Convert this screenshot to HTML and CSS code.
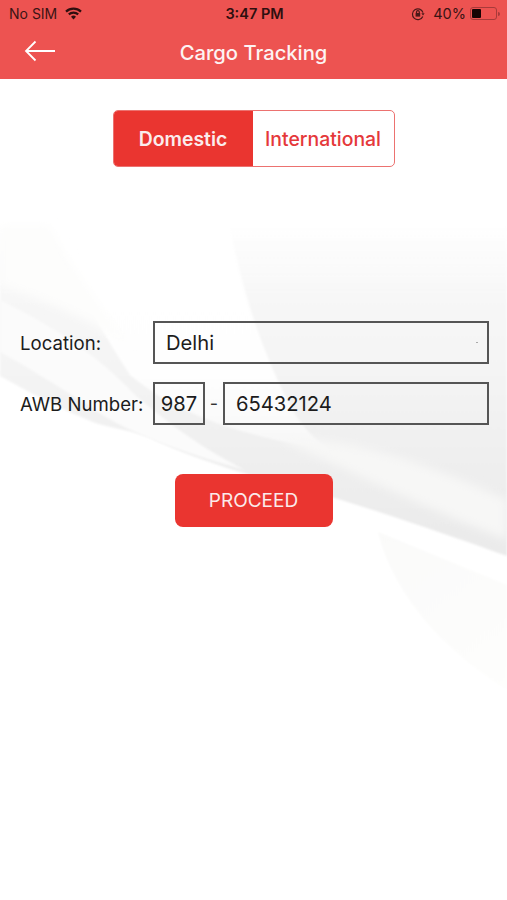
FILE: index.html
```html
<!DOCTYPE html>
<html lang="en">
  <head>
    <meta charset="UTF-8" />
    <meta name="viewport" content="width=device-width, initial-scale=1.0" />
    <title>Cargo Tracking</title>
    <link rel="stylesheet" href="styles.css">
  </head>
  <body>
    <div class="screen">
      <!-- background swoosh -->
      <svg class="swoosh" width="507" height="821" viewBox="0 79 507 821">
        <defs>
          <linearGradient id="base" gradientUnits="userSpaceOnUse" x1="0" y1="222" x2="0" y2="530">
            <stop offset="0" stop-color="#f6f6f6" stop-opacity="0" />
            <stop offset="0.25" stop-color="#f7f7f7" />
            <stop offset="0.55" stop-color="#f3f3f3" />
            <stop offset="1" stop-color="#ebebeb" />
          </linearGradient>
          <linearGradient id="wedge" gradientUnits="userSpaceOnUse" x1="0" y1="225" x2="0" y2="440">
            <stop offset="0" stop-color="#fff" />
            <stop offset="0.7" stop-color="#fefefe" />
            <stop offset="1" stop-color="#f8f8f8" />
          </linearGradient>
          <linearGradient id="tail" gradientUnits="userSpaceOnUse" x1="380" y1="520" x2="507" y2="700">
            <stop offset="0" stop-color="#fafaf9" />
            <stop offset="1" stop-color="#fefefd" />
          </linearGradient>
          <filter id="soft"><feGaussianBlur stdDeviation="1" /></filter>
          <filter id="softer"><feGaussianBlur stdDeviation="5" /></filter>
        </defs>
        <path d="M0 215 H507 V556 C440 532 390 515 335 498 C270 482 200 462 150 438 C125 428 105 428 88 420 C55 406 25 390 0 376 Z" fill="url(#base)" filter="url(#soft)" />
        <path d="M40 215 H228 C238 275 258 345 290 405 C300 425 315 440 330 450 C270 440 190 425 130 375 C100 330 70 270 40 215 Z" fill="url(#wedge)" filter="url(#soft)" />
        <path d="M0 300 C50 325 95 352 135 395 C170 425 205 450 245 470 C180 452 120 430 88 405 C55 385 25 365 0 352 Z" fill="#fbfbfb" filter="url(#soft)" />
        <path d="M0 225 H50 C70 265 100 305 130 345 C90 320 45 300 0 285 Z" fill="#fdfdfc" filter="url(#softer)" />
        <path d="M280 440 C340 435 420 460 507 500 V540 C430 510 350 470 280 440 Z" fill="#f7f7f6" filter="url(#softer)" />
        <path d="M378 532 L507 585 V690 C450 655 395 600 378 532 Z" fill="url(#tail)" filter="url(#soft)" />
      </svg>

      <header class="topbar">
        <div class="status">
          <div class="status-left">
            <span>No SIM</span>
            <svg class="wifi" width="17" height="13" viewBox="0 0 17 13">
              <path d="M1 4.6 A11 11 0 0 1 16 4.6" />
              <path d="M3.8 7.4 A7 7 0 0 1 13.2 7.4" />
              <path d="M8.5 12.6 L6 9.7 A3.6 3.6 0 0 1 11 9.7 Z" class="wifi-dot" />
            </svg>
          </div>
          <span class="clock">3:47 PM</span>
          <div class="status-right">
            <svg class="lock" width="14" height="14" viewBox="0 0 14 14">
              <path d="M11.8 9.4 A5.4 5.4 0 1 1 12 5.6" />
              <path d="M10.4 6.2 L13.6 6.2 L12 8.4 Z" class="lock-fill" />
              <rect x="4.6" y="6" width="4.6" height="3.6" class="lock-fill" />
              <path d="M5.5 6 V5 A1.4 1.4 0 0 1 8.3 5 V6" />
            </svg>
            <span class="pct">40%</span>
            <div class="battery"><div class="battery-level"></div></div>
            <div class="battery-tip"></div>
          </div>
        </div>
        <div class="navbar">
          <svg class="back" width="32" height="22" viewBox="0 0 32 22">
            <path d="M31 11 H2 M11.5 1.5 L2 11 L11.5 20.5" />
          </svg>
          <h1>Cargo Tracking</h1>
        </div>
      </header>

      <main class="content">
        <div class="tabs">
          <div class="tab active">Domestic</div>
          <div class="tab">International</div>
        </div>

        <div class="form">
          <div class="row">
            <label>Location:</label>
            <div class="field field-wide">Delhi<span class="caret"></span></div>
          </div>
          <div class="row">
            <label>AWB Number:</label>
            <div class="field field-code">987</div>
            <span class="dash">-</span>
            <div class="field field-wide">65432124</div>
          </div>
        </div>

        <a href="#" class="btn">PROCEED</a>
      </main>
    </div>
  </body>
</html>
```

FILE: styles.css
```css
body {
  font-family: Inter, "Liberation Sans", sans-serif;
  margin: 0;
  padding: 0;
  background-color: #fff;
}
.screen {
  position: relative;
  width: 507px;
  height: 900px;
  overflow: hidden;
  background: #fff;
}
.swoosh {
  position: absolute;
  left: 0;
  top: 79px;
}
.topbar {
  position: relative;
  height: 79px;
  background: #ed5351;
}
.status {
  display: grid;
  grid-template-columns: 1fr auto 1fr;
  align-items: center;
  height: 27px;
  padding: 0 7px 0 9px;
  color: #3a1414;
  font-size: 14px;
}
.status-left {
  display: flex;
  align-items: center;
  gap: 8px;
}
.wifi path {
  fill: none;
  stroke: #2e0f0f;
  stroke-width: 2.2;
}
.wifi .wifi-dot {
  fill: #2e0f0f;
  stroke: none;
}
.clock {
  font-weight: 600;
  font-size: 14.5px;
  color: #2e0f0f;
}
.status-right {
  display: flex;
  align-items: center;
  justify-content: flex-end;
}
.lock {
  margin-right: 8px;
}
.lock path {
  fill: none;
  stroke: #4a1818;
  stroke-width: 1.2;
}
.lock .lock-fill {
  fill: #4a1818;
  stroke: none;
}
.pct {
  margin-right: 4px;
  font-size: 14.5px;
}
.battery {
  width: 27px;
  height: 13px;
  box-sizing: border-box;
  padding: 1px;
  border: 1px solid #a83a3a;
  border-radius: 3px;
}
.battery-level {
  width: 9px;
  height: 100%;
  background: #160404;
  border-radius: 1px;
}
.battery-tip {
  width: 2px;
  height: 4px;
  margin-left: 1px;
  background: #a83a3a;
  border-radius: 0 2px 2px 0;
}
.navbar {
  position: relative;
  display: flex;
  align-items: center;
  justify-content: center;
  height: 52px;
  margin-top: -1px;
}
.back {
  position: absolute;
  left: 24px;
  top: 14px;
}
.back path {
  fill: none;
  stroke: #fff;
  stroke-width: 1.8;
}
h1 {
  margin: 0;
  color: #fdf3f3;
  font-size: 20.2px;
  font-weight: 500;
}
.content {
  position: relative;
  display: flex;
  flex-direction: column;
  align-items: center;
}
.tabs {
  display: flex;
  width: 282px;
  height: 57px;
  margin-top: 31px;
  box-sizing: border-box;
  background: #fff;
  border: 1.5px solid #ec7270;
  border-radius: 5px;
  overflow: hidden;
}
.tab {
  flex: 1;
  display: flex;
  align-items: center;
  justify-content: center;
  color: #e5383a;
  font-size: 19.4px;
  font-weight: 500;
}
.tab.active {
  flex: none;
  width: 139px;
  background: #ea3530;
  color: #fbecec;
  font-weight: 600;
}
.form {
  display: flex;
  flex-direction: column;
  gap: 18px;
  width: 100%;
  margin-top: 154px;
  padding: 0 18px 0 20px;
  box-sizing: border-box;
}
.row {
  display: flex;
  align-items: center;
}
.row label {
  width: 133px;
  color: #1c1c1c;
  font-size: 18.6px;
}
.field {
  height: 43px;
  box-sizing: border-box;
  display: flex;
  align-items: center;
  border: 2px solid #555;
  color: #1c1c1c;
  font-size: 20.2px;
}
.field-wide {
  flex: 1;
  padding-left: 11px;
}
.caret {
  width: 2px;
  height: 1px;
  margin-left: auto;
  margin-right: 9px;
  background: #aaa;
}
.field-code {
  justify-content: center;
  width: 52px;
}
.dash {
  width: 18px;
  text-align: center;
  color: #333;
  font-size: 18px;
}
.btn {
  display: flex;
  align-items: center;
  justify-content: center;
  width: 158px;
  height: 53px;
  margin-top: 49px;
  background: #ea3530;
  color: #fbeaea;
  border-radius: 8px;
  text-decoration: none;
  font-size: 19px;
}
```
